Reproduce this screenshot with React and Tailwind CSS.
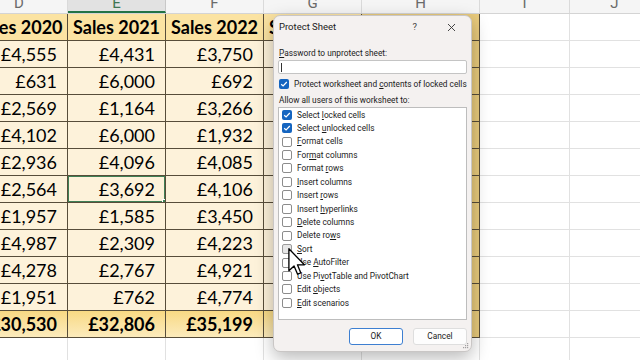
import React from "react";

const COLS = [
  { key: "D", w: "w-[97px]" },
  { key: "E", w: "w-[98px]" },
  { key: "F", w: "w-[98px]" },
  { key: "G", w: "w-[98px]" },
  { key: "H", w: "w-[118px]" },
  { key: "I", w: "w-[90px]" },
  { key: "J", w: "w-[90px]" },
];

const D = ["£4,555", "£631", "£2,569", "£4,102", "£2,936", "£2,564", "£1,957", "£4,987", "£4,278", "£1,951"];
const E = ["£4,431", "£6,000", "£1,164", "£6,000", "£4,096", "£3,692", "£1,585", "£2,309", "£2,767", "£762"];
const F = ["£3,750", "£692", "£3,266", "£1,932", "£4,085", "£4,106", "£3,450", "£4,223", "£4,921", "£4,774"];

const OPTIONS = [
  ["Select locked cells", 7, true],
  ["Select unlocked cells", 7, true],
  ["Format cells", 0],
  ["Format columns", 3],
  ["Format rows", 7],
  ["Insert columns", 0],
  ["Insert rows", 7],
  ["Insert hyperlinks", 7],
  ["Delete columns", 0],
  ["Delete rows", 9],
  ["Sort", 0, false, true],
  ["Use AutoFilter", 4],
  ["Use PivotTable and PivotChart", 6],
  ["Edit objects", 5],
  ["Edit scenarios", 0],
];

const sheetFont = { fontFamily: "Lato, 'Liberation Sans', sans-serif" };
const uiFont = { fontFamily: "Roboto, 'Noto Sans', sans-serif" };

function Mn({ text, at }) {
  return (
    <>
      {text.slice(0, at)}
      <span className="underline underline-offset-[1px]">{text[at]}</span>
      {text.slice(at + 1)}
    </>
  );
}

function Check({ checked, hover }) {
  if (checked) {
    return (
      <span className="w-[10px] h-[10px] rounded-[2px] bg-[#1565c0] flex items-center justify-center shrink-0">
        <svg width="8" height="8" viewBox="0 0 8 8">
          <path d="M1.2 4.2 L3.1 6 L6.8 2" fill="none" stroke="white" strokeWidth="1.2" />
        </svg>
      </span>
    );
  }
  return (
    <span
      className={
        hover
          ? "w-[10px] h-[10px] rounded-[2px] border border-[#9b9b9b] bg-[#e6e6e6] shrink-0"
          : "w-[10px] h-[10px] rounded-[2px] border border-[#8c8c8c] bg-white shrink-0"
      }
    />
  );
}

function ColHeader() {
  return (
    <div className="flex h-[14px] overflow-hidden bg-[#f5f5f5] border-b border-[#d4d4d4]">
      {COLS.map((c) => (
        <div
          key={c.key}
          className={
            c.key === "E"
              ? `${c.w} shrink-0 flex justify-center bg-[#e2e2e2] border-r border-[#c8c8c8] border-b-2 border-b-[#217346] text-[#3f7653]`
              : `${c.w} shrink-0 flex justify-center border-r border-[#dadada] text-[#6b6b6b]`
          }
        >
          <span className="text-[15px] leading-none -mt-[4px]" style={uiFont}>
            {c.key}
          </span>
        </div>
      ))}
    </div>
  );
}

function TableRow({ cells, kind, selected }) {
  const bg =
    kind === "head"
      ? "bg-[#fbe3a2]"
      : kind === "total"
      ? "bg-gradient-to-b from-[#f8d983] to-[#fcebbc]"
      : "bg-[#fdf2da]";
  const weight = kind === "data" ? "font-normal" : "font-bold";
  const align = kind === "head" ? "justify-center" : "justify-end pr-[10px]";
  return (
    <div className="flex h-[27px]">
      {cells.map((v, i) => (
        <div
          key={i}
          className={`${COLS[i].w} shrink-0 relative flex items-center ${align} ${bg} border-r border-b border-[#574d3a] text-[18px] text-black ${weight} whitespace-nowrap overflow-hidden`}
          style={sheetFont}
        >
          {v}
          {selected && i === 1 && (
            <span className="absolute -inset-[1px] border-2 border-[#3f7f55] pointer-events-none">
              <span className="absolute -right-[3px] -bottom-[3px] w-[5px] h-[5px] bg-[#3f7f55] border border-white" />
            </span>
          )}
        </div>
      ))}
      <div className="w-[118px] shrink-0 bg-[#e8ca7c] border-r border-b border-[#574d3a]" />
      <div className="w-[90px] shrink-0 border-r border-b border-[#e1e1e1]" />
      <div className="w-[90px] shrink-0 border-b border-[#e1e1e1]" />
    </div>
  );
}

function Sheet() {
  const rows = D.map((d, i) => [d, E[i], F[i], ""]);
  return (
    <div className="ml-[-29px] flex flex-col">
      <ColHeader />
      <TableRow kind="head" cells={["Sales 2020", "Sales 2021", "Sales 2022", "Sales 2023"]} />
      {rows.map((r, i) => (
        <TableRow key={i} kind="data" cells={r} selected={i === 5} />
      ))}
      <TableRow kind="total" cells={["£30,530", "£32,806", "£35,199", ""]} />
      <div className="flex h-[27px]">
        {COLS.map((c) => (
          <div key={c.key} className={`${c.w} shrink-0 border-r border-b border-[#e1e1e1]`} />
        ))}
      </div>
    </div>
  );
}

function Dialog() {
  return (
    <div
      className="absolute left-[273px] top-[15px] w-[199px] h-[337px] rounded-[7px] bg-[#f4f1f0] border border-[#c9c6c5] shadow-[0_6px_18px_rgba(0,0,0,0.28)] flex flex-col px-[4px] text-[8.3px] text-[#1b1b1b]"
      style={uiFont}
    >
      <div className="h-[23px] flex items-center pl-[1px] pr-[11px]">
        <span className="text-[9.5px] flex-1">Protect Sheet</span>
        <span className="text-[9.5px] text-[#444] mr-[30px]">?</span>
        <svg width="9" height="9" viewBox="0 0 9 9">
          <path d="M1 1 L8 8 M8 1 L1 8" stroke="#333" strokeWidth="0.9" />
        </svg>
      </div>
      <div className="mt-[8px] pl-[1px] leading-[12px]">
        <Mn text="Password to unprotect sheet:" at={0} />
      </div>
      <div className="mt-[1px] h-[14px] bg-white border border-[#c4c4c4] rounded-[2px] flex items-center pl-[2px]">
        <span className="w-px h-[9px] bg-[#333]" />
      </div>
      <div className="mt-[4px] h-[12px] flex items-center gap-[5px] pl-[1px]">
        <Check checked />
        <span className="whitespace-nowrap">
          <Mn text="Protect worksheet and contents of locked cells" at={22} />
        </span>
      </div>
      <div className="mt-[4px] pl-[1px] leading-[12px] whitespace-nowrap">Allow all users of this worksheet to:</div>
      <div className="mt-[1px] h-[213px] bg-white border border-[#bdbdbd] pl-[3px]">
        {OPTIONS.map(([label, at, checked, hover]) => (
          <div key={label} className="h-[13.45px] flex items-center gap-[5px] whitespace-nowrap">
            <Check checked={checked} hover={hover} />
            <span>
              <Mn text={label} at={at} />
            </span>
          </div>
        ))}
      </div>
      <div className="mt-[8px] flex justify-end gap-[10px]">
        <button className="w-[54px] h-[17px] rounded-[3px] bg-white border border-[#3d7fd1] text-[8.3px] text-[#1b1b1b]">
          OK
        </button>
        <button className="w-[54px] h-[17px] rounded-[3px] bg-[#fdfdfd] border border-[#dedede] text-[8.3px] text-[#1b1b1b]">
          Cancel
        </button>
      </div>
      <svg className="absolute right-[2px] bottom-[2px]" width="7" height="7" viewBox="0 0 7 7">
        <g fill="#a0a0a0">
          <rect x="5" y="1" width="1.2" height="1.2" />
          <rect x="3" y="3" width="1.2" height="1.2" />
          <rect x="5" y="3" width="1.2" height="1.2" />
          <rect x="1" y="5" width="1.2" height="1.2" />
          <rect x="3" y="5" width="1.2" height="1.2" />
          <rect x="5" y="5" width="1.2" height="1.2" />
        </g>
      </svg>
    </div>
  );
}

function Cursor() {
  return (
    <svg className="absolute left-[288px] top-[248px]" width="18" height="28" viewBox="0 0 12 19">
      <path
        d="M0.5 0.5 L0.5 15.5 L4 12.2 L6.4 17.8 L8.6 16.9 L6.3 11.4 L11 11.4 Z"
        fill="white"
        stroke="black"
        strokeWidth="0.9"
        strokeLinejoin="round"
      />
    </svg>
  );
}

export default function App() {
  return (
    <div className="relative w-[640px] h-[360px] overflow-hidden bg-white">
      <Sheet />
      <Dialog />
      <Cursor />
    </div>
  );
}
